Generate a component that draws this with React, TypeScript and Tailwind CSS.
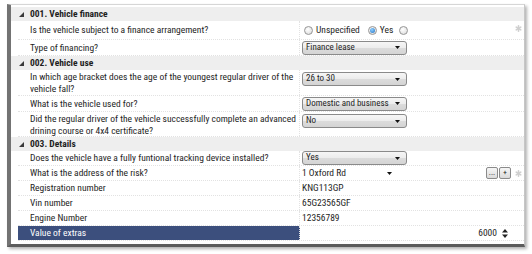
import type { ReactNode } from "react";

function Tri() {
  return (
    <svg width="5" height="5" viewBox="0 0 5 5" className="shrink-0">
      <polygon points="5,0 5,5 0,5" fill="#3a3a3a" />
    </svg>
  );
}

function Star({ className = "" }: { className?: string }) {
  return (
    <svg width="7" height="7" viewBox="0 0 7 7" className={className}>
      <g stroke="#cfcfcf" strokeWidth="1.6" strokeLinecap="round">
        <line x1="3.5" y1="0.8" x2="3.5" y2="6.2" />
        <line x1="1.2" y1="2.1" x2="5.8" y2="4.9" />
        <line x1="1.2" y1="4.9" x2="5.8" y2="2.1" />
      </g>
    </svg>
  );
}

function Header({ children }: { children: ReactNode }) {
  return (
    <div className="flex h-[14px] items-center bg-[#eeeeee] pl-[8px] font-bold">
      <Tri />
      <span className="ml-[6px]">{children}</span>
    </div>
  );
}

function Row({
  label,
  h,
  top,
  selected,
  children,
}: {
  label: ReactNode;
  h: string;
  top?: boolean;
  selected?: boolean;
  children?: ReactNode;
}) {
  return (
    <div className={`ml-[7px] flex border-b border-dotted border-[#e2e2e2] ${h}`}>
      <div
        className={`flex w-[282px] shrink-0 whitespace-nowrap border-r border-dotted border-[#e2e2e2] pl-[12px] leading-[12px] ${
          top ? "items-start pt-[1px]" : "items-center"
        } ${selected ? "bg-[#3c4f7d] text-white" : ""}`}
      >
        <span>{label}</span>
      </div>
      <div className={`relative flex flex-1 whitespace-nowrap pl-[2px] pr-[4px] ${top ? "items-start pt-[2px]" : "items-center"}`}>
        {children}
      </div>
    </div>
  );
}

function Select({ value }: { value: string }) {
  return (
    <div className="flex h-[14px] w-[105px] items-center justify-between rounded-[3px] border border-[#8a8a8a] bg-[linear-gradient(#f6f6f6_0%,#ececec_50%,#dcdcdc_51%,#d4d4d4_100%)] pl-[3px] pr-[6px] text-[9px]">
      <span>{value}</span>
      <svg width="5" height="3" viewBox="0 0 5 3">
        <polygon points="0,0 5,0 2.5,3" fill="#111" />
      </svg>
    </div>
  );
}

function Radio({ on }: { on?: boolean }) {
  return (
    <span className="flex h-[9px] w-[9px] items-center justify-center rounded-full border border-[#969696] bg-[radial-gradient(circle_at_40%_35%,#ffffff,#d8d8d8)]">
      {on && <span className="h-[5px] w-[5px] rounded-full bg-[radial-gradient(circle_at_40%_35%,#8fd0ff,#1f6fc4)]" />}
    </span>
  );
}

function SmallBtn({ children }: { children: ReactNode }) {
  return (
    <span className="flex h-[12px] w-[12px] items-center justify-center rounded-[2px] border border-[#8a8a8a] bg-[linear-gradient(#f6f6f6,#dadada)] text-[8px] leading-none">
      {children}
    </span>
  );
}

export default function App() {
  return (
    <div className="h-[254px] w-[532px] bg-white pl-[7px] pt-[4px] font-['Roboto_Condensed',sans-serif] text-[9.5px] text-[#1e1e1e]">
      <div className="flex h-[243px] w-[518px] flex-col border-b-[3px] border-l-[4px] border-r border-t border-b-[#5c5c5c] border-l-[#737373] border-r-[#c6c6c6] border-t-[#d6d6d6] pt-[2px] shadow-[2px_2px_3px_rgba(0,0,0,0.3)]">
        <Header>001. Vehicle finance</Header>
        <Row label="Is the vehicle subject to a finance arrangement?" h="h-[19px]">
          <div className="ml-[2px] flex items-center">
            <Radio />
            <span className="ml-[3px]">Unspecified</span>
            <span className="ml-[8px]" />
            <Radio on />
            <span className="ml-[3px]">Yes</span>
            <span className="ml-[6px]" />
            <Radio />
          </div>
          <Star className="absolute right-[2px] top-[4px]" />
        </Row>
        <Row label="Type of financing?" h="h-[16px]">
          <Select value="Finance lease" />
        </Row>
        <Header>002. Vehicle use</Header>
        <Row
          top
          h="h-[26px]"
          label={
            <>
              In which age bracket does the age of the youngest regular driver of the
              <br />
              vehicle fall?
            </>
          }
        >
          <Select value="26 to 30" />
        </Row>
        <Row label="What is the vehicle used for?" h="h-[16px]">
          <Select value="Domestic and business" />
        </Row>
        <Row
          top
          h="h-[25px]"
          label={
            <>
              Did the regular driver of the vehicle successfully complete an advanced
              <br />
              drining course or 4x4 certificate?
            </>
          }
        >
          <Select value="No" />
        </Row>
        <Header>003. Details</Header>
        <Row label="Does the vehicle have a fully funtional tracking device installed?" h="h-[15px]">
          <Select value="Yes" />
        </Row>
        <Row label="What is the address of the risk?" h="h-[15px]">
          <div className="flex w-[90px] items-center justify-between">
            <span>1 Oxford Rd</span>
            <svg width="5" height="3" viewBox="0 0 5 3">
              <polygon points="0,0 5,0 2.5,3" fill="#111" />
            </svg>
          </div>
          <div className="ml-auto mr-[9px] flex gap-[1px]">
            <SmallBtn>...</SmallBtn>
            <SmallBtn>+</SmallBtn>
          </div>
          <Star className="absolute right-[2px] top-[4px]" />
        </Row>
        <Row label="Registration number" h="h-[15px]">
          <span>KNG113GP</span>
        </Row>
        <Row label="Vin number" h="h-[15px]">
          <span>65G23565GF</span>
        </Row>
        <Row label="Engine Number" h="h-[15px]">
          <span>12356789</span>
        </Row>
        <Row label="Value of extras" h="h-[15px]" selected>
          <div className="ml-auto mr-[12px] flex items-center gap-[5px]">
            <span>6000</span>
            <svg width="6" height="9" viewBox="0 0 6 9">
              <polygon points="0,3.5 6,3.5 3,0" fill="#222" />
              <polygon points="0,5.5 6,5.5 3,9" fill="#222" />
            </svg>
          </div>
        </Row>
      </div>
    </div>
  );
}
